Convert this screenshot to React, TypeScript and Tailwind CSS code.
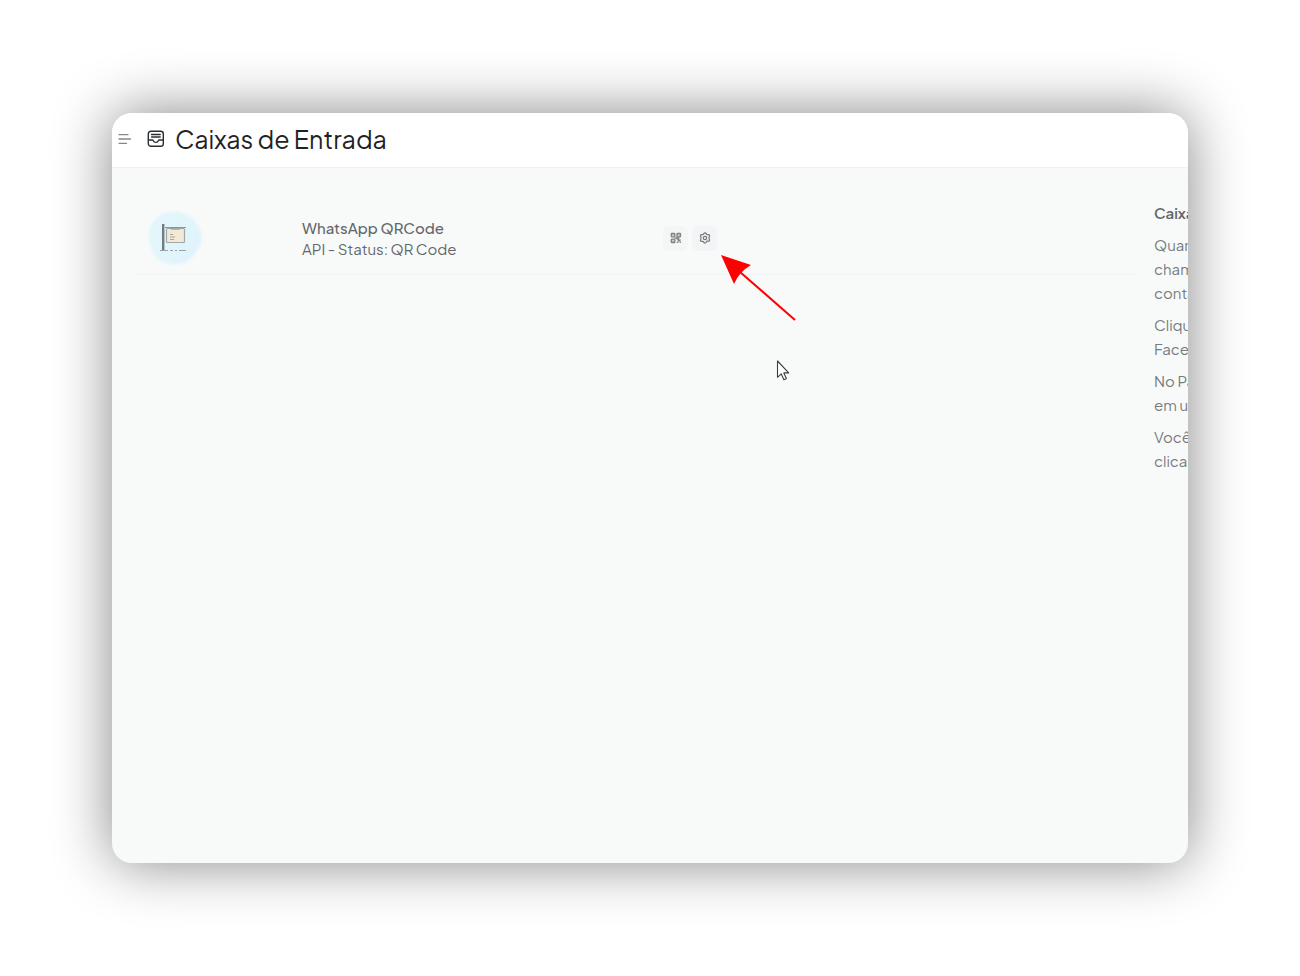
import React from "react";

const helpParagraphs: string[][] = [
  ["Quan", "cham", "conta"],
  ["Cliqu", "Face"],
  ["No Pa", "em u"],
  ["Você", "clicar"],
];

function MenuIcon() {
  return (
    <svg width="14" height="12" viewBox="0 0 14 12" fill="none" stroke="#85888a" strokeWidth="1.3" strokeLinecap="round">
      <path d="M1 1.700h9M1 6h11.500M1 10.300h7.500" />
    </svg>
  );
}

function InboxIcon() {
  return (
    <svg width="18" height="18" viewBox="0 0 18 18" fill="none" stroke="#2b2e31" strokeWidth="1.4" strokeLinejoin="round" strokeLinecap="round">
      <rect x="1.3" y="1.3" width="15" height="15" rx="2.6" />
      <path d="M1.500 10h3.900c.4 0 .7.3.9.7.4 1 1.300 1.700 2.500 1.700s2.100-.7 2.500-1.700c.2-.4.5-.7.9-.7h4" />
      <path d="M4.600 4.400h8.600M4.600 6.900h8.600" strokeWidth="1.500" />
    </svg>
  );
}

function ChannelBadge() {
  return (
    <svg width="58" height="56" viewBox="0 0 58 56" aria-label="API" role="img">
      <defs>
        <filter id="soft" x="-10%" y="-10%" width="120%" height="120%">
          <feGaussianBlur stdDeviation="1.5" />
        </filter>
        <linearGradient id="sky" x1="0" y1="0" x2="1" y2="0.5">
          <stop offset="0" stopColor="#e2f7fa" />
          <stop offset="1" stopColor="#e0f3fc" />
        </linearGradient>
      </defs>
      <path d="M20 3C29 0 41 2 48 9c5 5 8 11 9 18-1 10-8 20-16 25-9 4-20 3-27-2C6 43 3 33 4 24 5 13 11 6 20 3Z" fill="url(#sky)" filter="url(#soft)" />
      <rect x="17" y="14" width="2.400" height="26" fill="#727d83" />
      <path d="M20 17.500h21" stroke="#8c9699" strokeWidth="1" />
      <path d="M24 17v3M38 17v3" stroke="#8c9699" strokeWidth="1" />
      <rect x="21.500" y="18.500" width="18" height="14" rx="1" fill="#f2ead6" stroke="#a1a7a7" strokeWidth="1.200" />
      <path d="M26 19.500h9" stroke="#b5b9b8" strokeWidth="1" />
      <path d="M25 24.500h3M25 27h5M25 29.500h4" stroke="#a9a89f" strokeWidth="1" />
      <path d="M15 40.500h8M25 40.500h3M30 40.500h2M34 40.500h7" stroke="#98a3a7" strokeWidth="1" />
    </svg>
  );
}

function QrIcon() {
  return (
    <svg width="12" height="12" viewBox="0 0 12 12" fill="#c9cbcc" stroke="#7d8184" strokeWidth="1.300">
      <rect x="1.300" y="1.500" width="3.500" height="3.300" rx=".6" />
      <rect x="7" y="1.500" width="3.500" height="3.300" rx=".6" />
      <rect x="1.300" y="7.200" width="3.500" height="3.300" rx=".6" />
      <path fill="none" d="M6.700 7.200h1.600v1.600h1.600V7.200M6.700 10.300h1.600M9.700 10.300h1.200M4.800 6h4.500" />
    </svg>
  );
}

function GearIcon() {
  return (
    <svg width="12" height="12" viewBox="0 0 12 12" fill="none" stroke="#777b7e" strokeWidth="1.200" strokeLinejoin="round">
      <path d="M4.900 1.400 6 .9l1.100.5.4 1 1.100.2 1.400-.1.600 1.200-.5 1.200v1.900l.5 1.200-.600 1.200-1.400-.1-1.100.3-.4 1L6 11.100l-1.100-.500-.4-1-1.100-.3-1.400.1-.6-1.200.5-1.300V5l-.5-1.200.6-1.200 1.400.1 1.100-.3Z" />
      <circle cx="6" cy="6" r="1.700" />
    </svg>
  );
}

function Pointer() {
  return (
    <svg className="absolute top-[247px] left-[664px]" width="14" height="22" viewBox="0 0 14 22" aria-hidden="true">
      <path d="M1.500 1v16.300l3.700-3.500 2.700 6 2.500-1.200-2.600-5.700h4.900Z" fill="#fff" stroke="#3b3e41" strokeWidth="1.100" strokeLinejoin="round" />
    </svg>
  );
}

function Arrow() {
  return (
    <svg className="absolute top-[141px] left-[608px]" width="78" height="70" viewBox="0 0 78 70" aria-hidden="true">
      <path d="M20 18 75 66" stroke="#f00" strokeWidth="2" />
      <path d="M1 1 31 11Q19 18 14 30Z" fill="#f00" />
    </svg>
  );
}

export default function App() {
  return (
    <div className="flex min-h-screen flex-col bg-white px-28 py-[113px] font-['Plus_Jakarta_Sans','Inter',sans-serif]">
      <div className="relative flex flex-1 flex-col overflow-hidden rounded-[20px] bg-[#f8faf9] shadow-[0_0_58px_rgba(0,0,0,0.48)]">
        <header className="flex h-[55px] shrink-0 items-center border-b border-[#eff1f1] bg-white pb-0.5 pl-1.5">
          <button type="button" aria-label="Menu" className="mr-[15px]">
            <MenuIcon />
          </button>
          <InboxIcon />
          <h1 className="ml-2.5 text-[25px] leading-8 text-[#1f2225]">Caixas de Entrada</h1>
        </header>

        <div className="flex flex-1 gap-4 pl-6">
          <main className="min-w-0 flex-1 pt-[34px]">
            <table className="w-full table-fixed border-collapse">
              <tbody>
                <tr className="border-b border-[#f1f4f4]">
                  <td className="w-[166px] py-2 pl-[9px]">
                    <ChannelBadge />
                  </td>
                  <td className="w-[361px] text-[15px] leading-[21px] text-[#64686b]">
                    <span className="block font-medium">WhatsApp QRCode</span>
                    <span className="block">API - Status: QR Code</span>
                  </td>
                  <td>
                    <div className="flex gap-1">
                      <button type="button" aria-label="QR Code" className="flex size-[25px] items-center justify-center rounded-md bg-[#f4f6f6]">
                        <QrIcon />
                      </button>
                      <button type="button" aria-label="Configurações" className="flex size-[25px] items-center justify-center rounded-md bg-[#f2f4f6]">
                        <GearIcon />
                      </button>
                    </div>
                  </td>
                </tr>
              </tbody>
            </table>
          </main>

          <aside className="w-[34px] shrink-0 overflow-hidden pt-[33px] text-[15px] leading-6 whitespace-nowrap text-[#777b7e]">
            <h2 className="mb-2 font-semibold text-[#626669]">Caixa</h2>
            {helpParagraphs.map((lines) => (
              <p key={lines[0]} className="mb-2">
                {lines.map((line) => (
                  <span key={line} className="block">{line}</span>
                ))}
              </p>
            ))}
          </aside>
        </div>
        <Arrow />
        <Pointer />
      </div>
    </div>
  );
}
